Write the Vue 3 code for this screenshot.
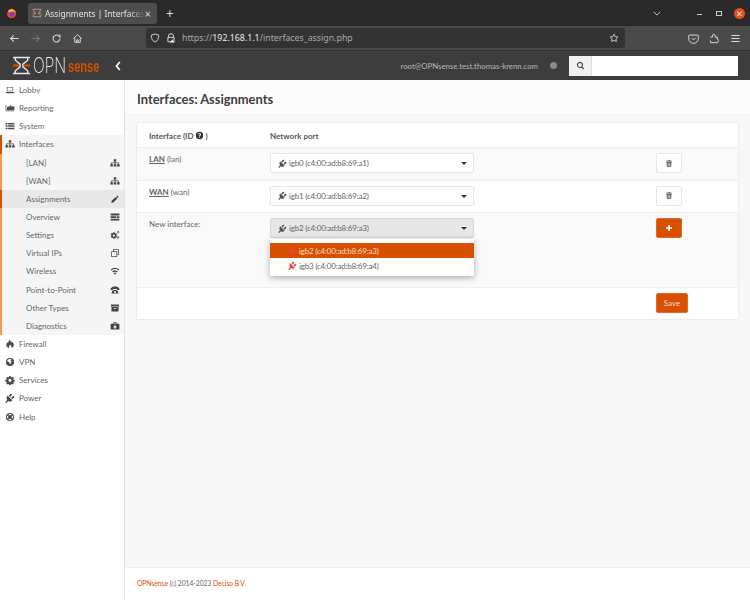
<script setup>
const icons = {
  laptop: 'M3 3h10v7H3zM4 4v5h8V4zM1 11h14l-1 2H2z',
  chart: 'M1 3h1v9h13v1H1zM3 11V7l2-2 2 1 2-3 2 3 2-1 2 1v5z',
  server: 'M1 3h3v2.500H1zM5 3h10v2.500H5zM1 6.800h3v2.500H1zM5 6.800h10v2.500H5zM1 10.600h3v2.500H1zM5 10.600h10v2.500H5z',
  sitemap: 'M6 2h4v3.500H8.600V7H14v3h1.400v3.500h-4V10h1.400V8.200H8.600V10H10v3.500H6V10h1.400V8.200H3.200V10h1.400v3.500h-4V10H2V7h5.400V5.500H6z',
  pencil: 'M11.500 2.500l2.500 2.500-1.500 1.500L10 4zM9.200 4.800l2.500 2.500L5.500 13.500 2 14l.6-3.300z',
  list: 'M1 2.500h14v3H1zM1 6.600h9v3H1zM11 6.600h4v3h-4zM1 10.700h14v3H1z',
  cogs: 'M5 3.500h2.400l.3 1.400 1.200.7 1.300-.5 1.100 2-1 1 0 1.300 1 1-1.100 2-1.300-.5-1.200.7-.3 1.400H5l-.3-1.400-1.200-.7-1.300.5-1.100-2 1-1 0-1.300-1-1 1.100-2 1.300.5 1.200-.7zM6.200 7a1.800 1.800 0 100 3.600 1.800 1.800 0 000-3.600zM13 1.500l1.100.4.1 1 .9.7-.4 1-1.100.2-.6.9-1.100-.4-.1-1-.9-.7.4-1 1.100-.2zM13.200 3a.8.8 0 100 1.600.8.800 0 000-1.600zM13 10l1.100.4.1 1 .9.7-.4 1-1.100.2-.6.9-1.100-.4-.1-1-.9-.7.4-1 1.100-.2zM13.200 11.500a.8.8 0 100 1.600.8.800 0 000-1.600z',
  copy: 'M5 1.500h9v9.500h-2.500v3.500H2V5h3zM6.200 2.700V5h5.300v4.800h1.300V2.700zM3.200 6.200v7.100h7.100V6.200z',
  wifi: 'M8 3c2.700 0 5.200 1 7 2.700l-1.300 1.500A8.300 8.300 0 008 5 8.300 8.300 0 002.300 7.200L1 5.700A10.200 10.200 0 018 3zM8 7c1.700 0 3.200.6 4.400 1.700L11 10.200A4.500 4.500 0 008 9a4.500 4.500 0 00-3 1.200L3.600 8.700A6.500 6.500 0 018 7zM8 10.500l2 1.200-2 2.300-2-2.300z',
  phone: 'M1 6c1-2.500 4-3.500 7-3.500s6 1 7 3.500v2h-3.500V6.500h-7V8H1zM3.500 9H5V8h6v1h1.500l1 4.500h-11zM8 9.500a1.700 1.700 0 100 3.400 1.700 1.700 0 000-3.400z',
  archive: 'M1.500 2.500h13v3h-13zM2.300 6.500h11.400v7H2.300zM6 8v1.200h4V8z',
  medkit: 'M5.500 2h5v2.500H14a1 1 0 011 1v7a1 1 0 01-1 1H2a1 1 0 01-1-1v-7a1 1 0 011-1h3.500zM6.700 3.200v1.300h2.600V3.200zM7 6.800v1.800H5.200v1.800H7v1.800h2v-1.800h1.800V8.600H9V6.800z',
  fire: 'M7.500 1c.5 2 2.500 3 3 5 .5-.5.5-1.200.4-2 2 1.500 3.100 3.500 3.100 5.500 0 2.800-2 4.500-4.500 4.500 1.200-.8 1.500-2 1-3-.3.500-.8.700-1.200.6.200-1.200-.3-2.400-1.300-3.100.1 1.500-1.500 2.300-1.500 3.800 0 .8.400 1.400 1 1.700C4.500 14 2 12.500 2 9.500c0-2 1.200-3.200 2.200-4.300.2.800.5 1.300 1 1.600C5 4.800 6 2.500 7.500 1z',
  globe: 'M8 1.500a6.500 6.500 0 110 13 6.500 6.500 0 010-13zM5 4L3.500 6l1 1.500 2 .5.500 2 1.500 1.500.5-2.500 2-1.500-2-1.500L9 4.500 10.500 3 8 3z',
  gear: 'M6.800 1.500h2.400l.4 1.800 1.300.6 1.600-1 1.700 1.700-1 1.600.6 1.300 1.800.4v2.400l-1.800.4-.6 1.300 1 1.600-1.700 1.700-1.600-1-1.300.6-.4 1.800H6.800l-.4-1.800-1.300-.6-1.600 1-1.700-1.700 1-1.600-.6-1.300-1.800-.4V7.900l1.800-.4.6-1.300-1-1.600 1.700-1.700 1.600 1 1.300-.6zM8 6a2.500 2.500 0 100 5 2.500 2.500 0 000-5z',
  plug: 'M4 4l8 8c-2.300 2.200-5 2.300-6.800.9L2 16 .5 14.500l3.100-3.200C2.200 9.500 2 6.500 4 4zM6 4.500L9.500.8l2 2L7.900 6.400zM9.700 8.100l3.600-3.600 2 2-3.600 3.600z',
  lifering: 'M8 1.500a6.500 6.500 0 110 13 6.500 6.500 0 010-13zM6 3.400v2.200a3 3 0 014 0V3.400a5 5 0 00-4 0zM3.400 6a5 5 0 000 4h2.200a3 3 0 010-4zM12.600 6h-2.200a3 3 0 010 4h2.200a5 5 0 000-4zM6 12.600a5 5 0 004 0v-2.200a3 3 0 01-4 0z',
  question: 'M8 1.500a6.500 6.500 0 110 13 6.500 6.500 0 010-13zM8 3.800c-1.500 0-2.500.8-2.800 2l1.500.5c.2-.7.600-1 1.200-1 .6 0 1 .3 1 .8 0 .9-1.800 1.100-1.800 3v.4h1.700c0-1.300 1.900-1.500 1.900-3.500 0-1.600-1.200-2.200-2.700-2.200zM7.100 10.300v1.700h1.800v-1.700z',
  trash: 'M6 1.500h4l.5 1.200H14v1.500H2V2.700h3.500zM3 5h10l-.7 9.500H3.700zM5.500 6.500v6.500h1V6.500zM7.500 6.500v6.500h1V6.500zM9.500 6.500v6.500h1V6.500z',
  plus: 'M6.300 2h3.400v4.300H14v3.400H9.700V14H6.300V9.700H2V6.300h4.300z',
  search: 'M7 1.500a5.500 5.500 0 014.400 8.800l3.300 3.300-1.500 1.500-3.300-3.300A5.500 5.500 0 117 1.500zM7 3.500a3.500 3.500 0 100 7 3.500 3.500 0 000-7z'
}

const topMenu = [
  { label: 'Lobby', icon: 'laptop' },
  { label: 'Reporting', icon: 'chart' },
  { label: 'System', icon: 'server' }
]

const subMenu = [
  { label: '[LAN]', icon: 'sitemap' },
  { label: '[WAN]', icon: 'sitemap' },
  { label: 'Assignments', icon: 'pencil', active: true },
  { label: 'Overview', icon: 'list' },
  { label: 'Settings', icon: 'cogs' },
  { label: 'Virtual IPs', icon: 'copy' },
  { label: 'Wireless', icon: 'wifi' },
  { label: 'Point-to-Point', icon: 'phone' },
  { label: 'Other Types', icon: 'archive' },
  { label: 'Diagnostics', icon: 'medkit' }
]

const bottomMenu = [
  { label: 'Firewall', icon: 'fire' },
  { label: 'VPN', icon: 'globe' },
  { label: 'Services', icon: 'gear' },
  { label: 'Power', icon: 'plug' },
  { label: 'Help', icon: 'lifering' }
]

const assigned = [
  { name: 'LAN', id: '(lan)', port: 'igb0 (c4:00:ad:b8:69:a1)' },
  { name: 'WAN', id: '(wan)', port: 'igb1 (c4:00:ad:b8:69:a2)' }
]
</script>

<template>
  <div class="screen">
    <div class="tabbar">
      <svg class="ff-logo" viewBox="0 0 16 16">
        <circle cx="8" cy="8.500" r="6.500" fill="#e8452c" />
        <circle cx="8.500" cy="9" r="3.600" fill="#7a3ec0" />
        <path d="M3 5c1-3 5-4 7.500-3 2.500 1 4 3.500 4 6-1-2-2.500-3-4.500-3-2 0-3 1-5 1z" fill="#ffb02e" />
      </svg>
      <div class="tab">
        <svg class="tab-favicon" viewBox="0 0 16 16">
          <path d="M2 2h12v2L10 8l4 4v2H2v-2l4-4-4-4z" fill="none" stroke="#b9b9b9" stroke-width="1.200" />
          <path d="M1 7h5v2H1zM10 7h5v2h-5z" fill="#e0672a" />
        </svg>
        <span class="tab-title">Assignments | Interfaces</span>
        <span class="tab-close">×</span>
      </div>
      <span class="new-tab">+</span>
      <svg class="tab-list" viewBox="0 0 10 6"><path d="M1 1l4 4 4-4" fill="none" stroke="#d5d5d5" stroke-width="1.100" /></svg>
      <span class="win-min"></span>
      <span class="win-max"></span>
      <span class="win-close">×</span>
    </div>

    <div class="toolbar">
      <svg class="tool" viewBox="0 0 16 16"><path d="M14 8H3M7 3.500L2.500 8 7 12.500" fill="none" stroke="#ddd" stroke-width="1.500" /></svg>
      <svg class="tool" viewBox="0 0 16 16"><path d="M2 8h11M9 3.500L13.500 8 9 12.500" fill="none" stroke="#777" stroke-width="1.500" /></svg>
      <svg class="tool" viewBox="0 0 16 16"><path d="M13 8a5 5 0 11-1.500-3.500L13 6V2" fill="none" stroke="#ddd" stroke-width="1.500" /></svg>
      <svg class="tool" viewBox="0 0 16 16"><path d="M2 8l6-5.500L14 8M4 7v6.500h8V7M7 13.500V10h2v3.500" fill="none" stroke="#ddd" stroke-width="1.400" /></svg>
      <div class="urlbar">
        <svg class="url-icon" viewBox="0 0 16 16"><path d="M8 1.500l6 2c0 5-1.500 9-6 11-4.500-2-6-6-6-11z" fill="none" stroke="#ddd" stroke-width="1.400" /></svg>
        <svg class="url-icon" viewBox="0 0 16 16"><path d="M4 7V5a4 4 0 018 0v2M3 7h10v7H3z" fill="none" stroke="#ddd" stroke-width="1.500" /><path d="M10 10l3.500 5h-7z" fill="#eee" /></svg>
        <span class="url"><span class="url-dim">https://</span><b>192.168.1.1</b><span class="url-dim">/interfaces_assign.php</span></span>
        <svg class="url-star" viewBox="0 0 16 16"><path d="M8 1.800l1.900 4 4.300.6-3.100 3 .7 4.300L8 11.700l-3.800 2 .7-4.300-3.100-3 4.300-.6z" fill="none" stroke="#ddd" stroke-width="1.300" /></svg>
      </div>
      <svg class="tool" viewBox="0 0 16 16"><path d="M2 3h12a1 1 0 011 1v4a7 7 0 01-14 0V4a1 1 0 011-1zM5 7l3 3 3-3" fill="none" stroke="#ddd" stroke-width="1.400" /></svg>
      <svg class="tool" viewBox="0 0 16 16"><path d="M2 6h3V4a2 2 0 014 0v2h3v3a2 2 0 010 4v1H2v-3" fill="none" stroke="#ddd" stroke-width="1.400" /></svg>
      <svg class="tool" viewBox="0 0 16 16"><path d="M2 3.500h12M2 8h12M2 12.500h12" fill="none" stroke="#ddd" stroke-width="1.500" /></svg>
    </div>

    <header class="navbar">
      <svg class="logo-mark" viewBox="0 0 20 20">
        <path d="M1 1.500h18M1 18.500h18M3.500 1.500v3l5 4v3l-5 4v3M16.500 1.500v3l-5 4v3l5 4v3" fill="none" stroke="#e6e6e6" stroke-width="1.500" />
        <path d="M1 9h6.500v2H1zM12.500 9H19v2h-6.500z" fill="#d94f00" />
      </svg>
      <span class="logo-opn">OPN</span>
      <span class="logo-sense">sense</span>
      <svg class="collapse" viewBox="0 0 6 10"><path d="M4.800 1L1.500 5l3.300 4" fill="none" stroke="#f5f5f5" stroke-width="1.800" /></svg>
      <span class="user">root@OPNsense.test.thomas-krenn.com</span>
      <span class="status-dot"></span>
      <div class="search">
        <span class="search-addon"><svg class="search-icon" viewBox="0 0 16 16"><path :d="icons.search" /></svg></span>
        <span class="search-input"></span>
      </div>
    </header>

    <div class="body">
      <aside class="sidebar">
        <a v-for="item in topMenu" :key="item.label" class="menu-item">
          <svg class="menu-icon" viewBox="0 0 16 16"><path :d="icons[item.icon]" /></svg>
          {{ item.label }}
        </a>
        <div class="menu-group">
          <a class="menu-item">
            <svg class="menu-icon" viewBox="0 0 16 16"><path :d="icons.sitemap" /></svg>
            Interfaces
          </a>
          <a
            v-for="item in subMenu"
            :key="item.label"
            class="sub-item"
            :class="{ active: item.active }"
          >
            {{ item.label }}
            <svg class="sub-icon" viewBox="0 0 16 16"><path :d="icons[item.icon]" /></svg>
          </a>
        </div>
        <a v-for="item in bottomMenu" :key="item.label" class="menu-item">
          <svg class="menu-icon" viewBox="0 0 16 16"><path :d="icons[item.icon]" /></svg>
          {{ item.label }}
        </a>
      </aside>

      <main class="main">
        <div class="page-head">Interfaces: Assignments</div>

        <section class="card">
          <div class="row row-head">
            <div class="col-name">
              Interface (ID<svg class="help" viewBox="0 0 16 16"><path :d="icons.question" /></svg>)
            </div>
            <div class="col-port">Network port</div>
          </div>

          <div v-for="row in assigned" :key="row.name" class="row">
            <div class="col-name"><b class="if-name">{{ row.name }}</b> {{ row.id }}</div>
            <div class="col-port">
              <div class="select">
                <svg class="plug" viewBox="0 0 16 16"><path :d="icons.plug" /></svg>
                {{ row.port }}
                <span class="caret"></span>
              </div>
            </div>
            <div class="col-action">
              <button class="btn">
                <svg class="trash" viewBox="0 0 16 16"><path :d="icons.trash" /></svg>
              </button>
            </div>
          </div>

          <div class="row row-new">
            <div class="col-name">New interface:</div>
            <div class="col-port">
              <div class="select select-open">
                <svg class="plug" viewBox="0 0 16 16"><path :d="icons.plug" /></svg>
                igb2 (c4:00:ad:b8:69:a3)
                <span class="caret"></span>
              </div>
              <ul class="dropdown">
                <li class="option selected">
                  <svg class="plug-red" viewBox="0 0 16 16"><path :d="icons.plug" /></svg>
                  igb2 (c4:00:ad:b8:69:a3)
                </li>
                <li class="option">
                  <svg class="plug-red" viewBox="0 0 16 16"><path :d="icons.plug" /></svg>
                  igb3 (c4:00:ad:b8:69:a4)
                </li>
              </ul>
            </div>
            <div class="col-action">
              <button class="btn btn-primary">
                <svg class="plus" viewBox="0 0 16 16"><path :d="icons.plus" /></svg>
              </button>
            </div>
          </div>

          <div class="row row-save">
            <div class="col-action col-save">
              <button class="btn btn-primary btn-save">Save</button>
            </div>
          </div>
        </section>

        <footer class="footer">
          <span class="accent">OPNsense</span> (c) 2014-2023 <span class="accent">Deciso B.V.</span>
        </footer>
      </main>
    </div>

    <svg class="cursor" viewBox="0 0 14 16">
      <path d="M4.500 1.500c.8-.6 1.700 0 1.700.8v4.500l.8-.3c.8 0 1 .5 1.200.6.700-.3 1.300 0 1.500.5.700-.2 1.400.2 1.500.8.700-.1 1.300.3 1.300 1v2.500c0 1.500-1 2.600-2 3.100H6.500c-1-.6-2.500-3-3.500-4.500-.6-.9.400-1.800 1.300-1.100V2.500c0-.4 0-.8.200-1z" fill="#fff" stroke="#333" stroke-width=".8" />
    </svg>
  </div>
</template>

<style>
html,
body {
  margin: 0;
  background: #f7f7f7;
}
</style>

<style scoped>
.screen {
  position: relative;
  width: 750px;
  height: 600px;
  overflow: hidden;
  display: flex;
  flex-direction: column;
  font-family: 'Lato', 'Open Sans', sans-serif;
  font-size: 8px;
  color: #555;
}

.tabbar {
  height: 26px;
  flex: none;
  display: flex;
  align-items: center;
  background: #2a2a2a;
  color: #ddd;
}

.ff-logo {
  width: 11px;
  height: 11px;
  margin: 0 11px 0 6px;
}

.tab {
  width: 129px;
  height: 21px;
  display: flex;
  align-items: center;
  background: #4e4e4e;
  border-radius: 3px;
  padding: 0 6px 0 4px;
  box-sizing: border-box;
  margin-right: 9px;
}

.tab-favicon {
  width: 10px;
  height: 10px;
  flex: none;
  margin-right: 3px;
}

.tab-title {
  flex: 1;
  white-space: nowrap;
  font-family: 'Noto Sans', sans-serif;
  font-size: 8.400px;
  color: #e4e4e4;
  -webkit-mask-image: linear-gradient(to right, #000 85%, transparent);
  mask-image: linear-gradient(to right, #000 85%, transparent);
}

.tab-close {
  font-size: 11px;
  line-height: 1;
}

.new-tab {
  font-size: 13px;
  line-height: 1;
  color: #ddd;
}

.tab-list {
  width: 8px;
  height: 5px;
  margin-left: auto;
  margin-right: 36px;
}

.win-min {
  width: 5px;
  height: 1px;
  background: #ccc;
  margin: 3px 14px 0 0;
}

.win-max {
  width: 6px;
  height: 5px;
  border: 1px solid #ccc;
  box-sizing: border-box;
  margin-right: 12px;
}

.win-close {
  width: 11px;
  height: 11px;
  border-radius: 50%;
  background: #e2501f;
  color: #fff;
  font-size: 10px;
  line-height: 10px;
  text-align: center;
  margin-right: 5px;
}

.toolbar {
  height: 24px;
  flex: none;
  display: flex;
  align-items: center;
  background: #4a4a4a;
  padding-left: 9px;
}

.tool {
  width: 11px;
  height: 11px;
  margin-right: 10px;
  flex: none;
}

.urlbar {
  width: 479px;
  height: 20px;
  margin: 0 63px 0 53px;
  display: flex;
  align-items: center;
  background: #333;
  border-radius: 3px;
  padding: 0 6px 0 4px;
  box-sizing: border-box;
  flex: none;
}

.url-icon {
  width: 10px;
  height: 10px;
  margin-right: 6px;
  flex: none;
}

.url {
  flex: 1;
  font-family: 'Noto Sans', sans-serif;
  font-size: 8.800px;
  color: #eee;
  white-space: nowrap;
}

.url b {
  font-weight: 400;
}

.url-dim {
  color: #aaa;
}

.url-star {
  width: 10px;
  height: 10px;
}

.navbar {
  height: 30px;
  flex: none;
  display: flex;
  align-items: center;
  background: #3d3d3d;
  border-top: 1px solid #333;
  box-sizing: border-box;
  padding-left: 12px;
}

.logo-mark {
  width: 19px;
  height: 19px;
  margin-right: 2px;
}

.logo-opn {
  display: inline-block;
  width: 35px;
  font-family: 'Inter', sans-serif;
  font-weight: 200;
  font-size: 21px;
  line-height: 1;
  color: #f0f0f0;
  transform: scaleX(0.74);
  transform-origin: left center;
}

.logo-sense {
  width: 32px;
  font-family: 'Liberation Sans', sans-serif;
  font-weight: 700;
  font-size: 17px;
  line-height: 1;
  color: #d94f00;
  margin-top: 2px;
  transform: scaleX(0.65);
  transform-origin: left center;
}

.collapse {
  margin-left: 15px;
  width: 6px;
  height: 10px;
}

.user {
  margin-left: auto;
  margin-right: 12px;
  font-size: 7.800px;
  color: #b8b8b8;
}

.status-dot {
  width: 7px;
  height: 7px;
  border-radius: 50%;
  background: #8a8a8a;
  margin-right: 12px;
}

.search {
  width: 169px;
  height: 20px;
  display: flex;
  background: #fff;
  margin-right: 12px;
}

.search-addon {
  width: 22px;
  display: flex;
  align-items: center;
  justify-content: center;
  background: #f1f1f1;
  border-right: 1px solid #ddd;
}

.search-icon {
  width: 9px;
  height: 9px;
  fill: #444;
}

.search-input {
  flex: 1;
}

.body {
  flex: 1;
  display: flex;
  min-height: 0;
}

.sidebar {
  width: 125px;
  flex: none;
  box-sizing: border-box;
  background: #fff;
  border-right: 1px solid #e5e5e5;
  padding-top: 1px;
}

.menu-item {
  display: flex;
  align-items: center;
  height: 18.150px;
  padding-left: 5px;
  box-sizing: border-box;
  color: #666;
}

.menu-icon {
  width: 10px;
  height: 10px;
  margin-right: 4px;
  fill: #4a4a4a;
  flex: none;
}

.menu-group {
  background: #f5f5f5;
  border-left: 2px solid #f19b4e;
}

.menu-group .menu-item {
  margin-left: -2px;
  padding-left: 3px;
  border-left: 2px solid #d94f00;
}

.sub-item {
  display: flex;
  align-items: center;
  justify-content: space-between;
  height: 18.150px;
  padding: 0 4px 0 24px;
  color: #666;
}

.sub-item.active {
  background: #e8e8e8;
  margin-left: -2px;
  border-left: 2px solid #d94f00;
}

.sub-icon {
  width: 10px;
  height: 10px;
  fill: #444;
}

.main {
  flex: 1;
  min-width: 0;
  display: flex;
  flex-direction: column;
  background: #f7f7f7;
}

.page-head {
  height: 35px;
  flex: none;
  box-sizing: border-box;
  padding: 10px 0 0 12px;
  background: #fcfcfc;
  border-bottom: 1px solid #f0f0f0;
  font-size: 12.900px;
  line-height: 18px;
  font-weight: 700;
  color: #3c3c3c;
}

.card {
  margin: 8px 12px 0;
  background: #fff;
  box-shadow: 0 0 1px rgba(0, 0, 0, 0.25);
}

.row {
  display: flex;
  height: 32.500px;
  box-sizing: border-box;
  border-top: 1px solid #eee;
  padding-top: 5px;
  color: #666;
}

.row:nth-child(even) {
  background: #f9f9f9;
}

.row-head {
  height: 24px;
  border-top: 0;
  padding-top: 7px;
  font-weight: 700;
  color: #555;
}

.row-new {
  height: 75px;
}

.row-save {
  height: 32px;
  justify-content: flex-end;
}

.col-name {
  width: 133px;
  flex: none;
  padding-left: 12px;
  box-sizing: border-box;
  line-height: 12px;
}

.if-name {
  text-decoration: underline;
}

.help {
  width: 9px;
  height: 9px;
  margin: 0 2px 0 1px;
  fill: #333;
  vertical-align: -1px;
}

.col-port {
  position: relative;
  width: 386px;
  flex: none;
  line-height: 12px;
}

.col-action {
  flex: none;
}

.col-save {
  margin-right: 50px;
}

.select {
  position: relative;
  width: 204px;
  height: 20px;
  box-sizing: border-box;
  display: flex;
  align-items: center;
  gap: 2px;
  padding-left: 7px;
  background: #fff;
  border: 1px solid #e4e4e4;
  border-radius: 2px;
  color: #666;
  letter-spacing: -0.200px;
}

.select-open {
  background: #e6e6e6;
  border-color: #d5d5d5;
}

.plug {
  width: 9px;
  height: 9px;
  fill: #555;
  flex: none;
}

.caret {
  position: absolute;
  right: 6px;
  top: 8px;
  border-top: 3px solid #333;
  border-left: 3px solid transparent;
  border-right: 3px solid transparent;
}

.dropdown {
  position: absolute;
  left: 0;
  top: 21px;
  z-index: 2;
  width: 204px;
  box-sizing: border-box;
  margin: 0;
  padding: 4px 0 3px;
  list-style: none;
  background: #fff;
  box-shadow: 0 2px 6px rgba(0, 0, 0, 0.3);
}

.option {
  display: flex;
  align-items: center;
  gap: 2px;
  height: 15px;
  padding-left: 18px;
  color: #666;
  letter-spacing: -0.200px;
}

.option.selected {
  background: #d94f00;
  color: #f6dccb;
}

.plug-red {
  width: 9px;
  height: 9px;
  fill: #e8453c;
  flex: none;
}

.btn {
  width: 26px;
  height: 20px;
  padding: 0;
  display: flex;
  align-items: center;
  justify-content: center;
  background: #fff;
  border: 1px solid #e6e6e6;
  border-radius: 2px;
}

.btn-primary {
  background: #d94f00;
  border-color: #e4682a;
}

.btn-save {
  width: 32px;
  font-family: inherit;
  font-size: 8px;
  color: #f6dccb;
}

.trash {
  width: 8px;
  height: 9px;
  fill: #555;
}

.plus {
  width: 8px;
  height: 8px;
  fill: #fff;
}

.footer {
  margin-top: auto;
  height: 33px;
  box-sizing: border-box;
  padding: 11px 0 0 12px;
  background: #fff;
  border-top: 1px solid #eee;
  font-size: 6.700px;
  color: #666;
}

.accent {
  color: #d94f00;
}

.cursor {
  position: absolute;
  left: 426px;
  top: 250px;
  width: 11px;
  height: 14px;
}
</style>
